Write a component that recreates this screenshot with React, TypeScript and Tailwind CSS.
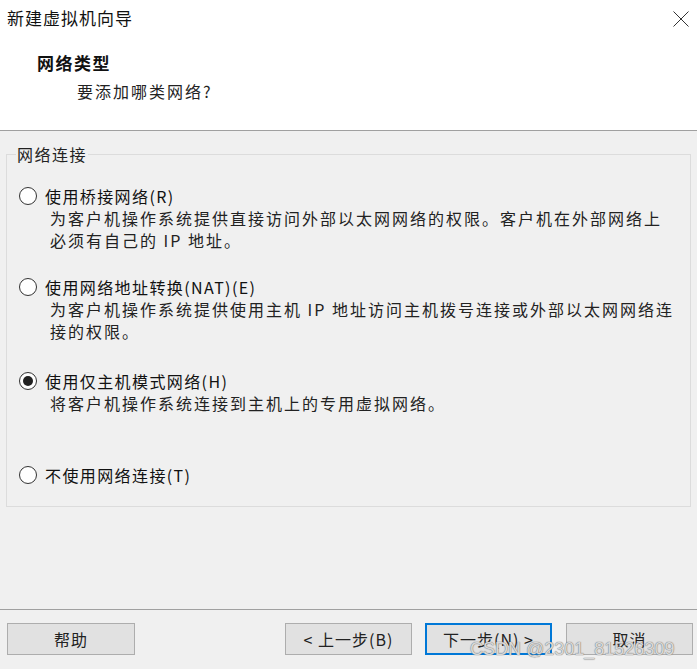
const cjk = "font-['Microsoft_YaHei','Noto_Sans_CJK_SC',sans-serif]";

interface OptionProps {
  label: string;
  desc?: string[];
  checked?: boolean;
  className?: string;
}

function RadioOption({ label, desc = [], checked = false, className = "" }: OptionProps) {
  return (
    <div className={className}>
      <div className="flex items-center h-[22px]">
        <span className="ml-[12px] w-[18px] h-[18px] rounded-full border border-[#333] bg-white flex items-center justify-center shrink-0">
          {checked && <span className="w-[10px] h-[10px] rounded-full bg-[#222]" />}
        </span>
        <span className="ml-[8px] text-[16px] tracking-[1.4px] text-[#111] leading-[22px]">{label}</span>
      </div>
      {desc.map((line) => (
        <div key={line} className="pl-[43px] text-[16px] tracking-[2px] leading-[22px] text-[#222] whitespace-nowrap">
          {line}
        </div>
      ))}
    </div>
  );
}

export default function App() {
  return (
    <div className={`relative w-[697px] h-[669px] flex flex-col bg-[#f0f0f0] ${cjk} overflow-hidden`}>
      {/* header */}
      <div className="h-[131px] bg-white border-b border-[#a0a0a0] shrink-0">
        <div className="flex items-center justify-between h-[36px] pl-[7px] pr-[8px]">
          <span className="text-[17px] tracking-[1px] text-[#111]">新建虚拟机向导</span>
          <svg width="16" height="16" viewBox="0 0 16 16" className="mt-[1px]">
            <path d="M0.5 0.5 L15.5 15.5 M15.5 0.5 L0.5 15.5" stroke="#333" strokeWidth="1" />
          </svg>
        </div>
        <div className="pl-[37px] mt-[15px] text-[17px] font-bold tracking-[1.5px] leading-[24px] text-[#111]">网络类型</div>
        <div className="pl-[77px] mt-[4px] text-[16px] tracking-[2px] leading-[24px] text-[#222]">要添加哪类网络?</div>
      </div>

      {/* body */}
      <div className="flex-1 px-[6px] pt-[13px]">
        <fieldset className="border border-[#dcdcdc] h-[363px] px-0">
          <legend className="ml-[9px] px-[1px] text-[16px] tracking-[1.5px] leading-[20px] text-[#222]">网络连接</legend>
          <RadioOption
            className="mt-[21px]"
            label="使用桥接网络(R)"
            desc={["为客户机操作系统提供直接访问外部以太网网络的权限。客户机在外部网络上", "必须有自己的 IP 地址。"]}
          />
          <RadioOption
            className="mt-[25px]"
            label="使用网络地址转换(NAT)(E)"
            desc={["为客户机操作系统提供使用主机 IP 地址访问主机拨号连接或外部以太网网络连", "接的权限。"]}
          />
          <RadioOption
            className="mt-[28px]"
            checked
            label="使用仅主机模式网络(H)"
            desc={["将客户机操作系统连接到主机上的专用虚拟网络。"]}
          />
          <RadioOption className="mt-[50px]" label="不使用网络连接(T)" />
        </fieldset>
      </div>

      {/* footer */}
      <div className="h-[60px] shrink-0 border-t border-[#a0a0a0] flex items-start pt-[13px] pl-[7px] pr-[4px] text-[16px] text-[#222]">
        <button className="w-[128px] h-[32px] bg-[#e1e1e1] border border-[#adadad] tracking-[1px]">帮助</button>
        <div className="flex-1" />
        <button className="w-[127px] h-[32px] bg-[#e1e1e1] border border-[#adadad] tracking-[1px]">&lt; 上一步(B)</button>
        <button className="ml-[13px] w-[127px] h-[32px] bg-[#e1e1e1] border-2 border-[#0078d7] tracking-[1px]">下一步(N) &gt;</button>
        <button className="ml-[14px] w-[127px] h-[32px] bg-[#e1e1e1] border border-[#adadad] tracking-[1px]">取消</button>
      </div>

      {/* watermark */}
      <div className="absolute left-[470px] top-[638px] whitespace-nowrap text-[18px] leading-[22px] font-['Liberation_Sans',Arial,sans-serif] text-[#e6e6e6]/90 [text-shadow:0_0_1px_#777,0_0_1px_#777]">
        CSDN @2301_81526309
      </div>
    </div>
  );
}
